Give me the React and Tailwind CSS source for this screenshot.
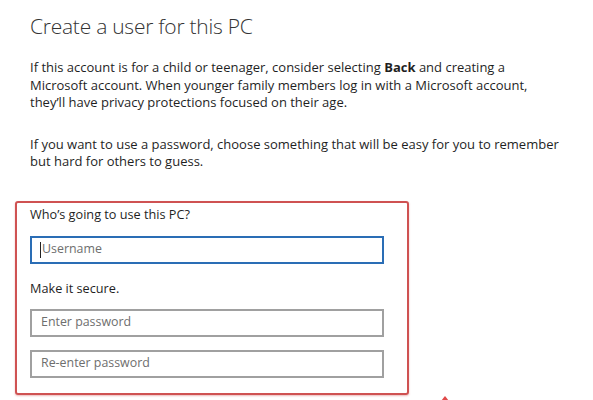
const FONT = "font-['Open_Sans','Noto_Sans',sans-serif]"

function Field({ placeholder, focused }) {
  return (
    <div
      className={`w-[354px] h-[28px] border-2 flex items-center pl-[9px] text-[12.4px] text-[#6e6e6e] ${
        focused ? 'border-[#2a6db5]' : 'border-[#a0a0a0]'
      }`}
    >
      {focused && <span className="w-px h-[16px] bg-[#222] -ml-px mr-px" />}
      {placeholder}
    </div>
  )
}

export default function App() {
  return (
    <div className={`w-[593px] h-[400px] bg-white overflow-hidden relative ${FONT} text-[#1f1f1f]`}>
      <div className="px-[30px] pt-[12px]">
        <h1 className="text-[21px] leading-[28px] font-light tracking-[-0.25px] text-[#333]">
          Create a user for this PC
        </h1>
        <p className="mt-[19px] text-[13px] leading-[17.5px] whitespace-nowrap">
          If this account is for a child or teenager, consider selecting <b className="font-bold">Back</b> and creating a
          <br />
          Microsoft account. When younger family members log in with a Microsoft account,
          <br />
          they’ll have privacy protections focused on their age.
        </p>
        <p className="mt-[24px] text-[13px] leading-[17.5px] whitespace-nowrap">
          If you want to use a password, choose something that will be easy for you to remember
          <br />
          but hard for others to guess.
        </p>
      </div>

      <div className="ml-[15px] mt-[30px] w-[394px] h-[194px] border-2 border-[#cf5252] rounded-[3px] pl-[13px] pt-[2px] shadow-[0_1px_2px_rgba(200,60,60,0.35)]">
        <div className="text-[12.7px] leading-[18px]">Who’s going to use this PC?</div>
        <div className="mt-[13px]">
          <Field placeholder="Username" focused />
        </div>
        <div className="mt-[15px] text-[12.7px] leading-[18px]">Make it secure.</div>
        <div className="mt-[12px]">
          <Field placeholder="Enter password" />
        </div>
        <div className="mt-[13px]">
          <Field placeholder="Re-enter password" />
        </div>
      </div>

      <div className="absolute left-[441px] top-[396px] w-0 h-0 border-l-[4px] border-r-[4px] border-b-[5px] border-l-transparent border-r-transparent border-b-[#e04a4a]" />
    </div>
  )
}
